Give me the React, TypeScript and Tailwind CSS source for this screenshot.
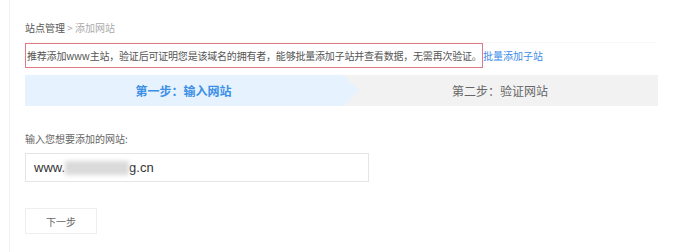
import React from "react";

const cjk = { fontFamily: '"Noto Sans CJK SC", "Noto Sans", sans-serif' };

export default function App() {
  return (
    <div className="w-[697px] h-[252px] bg-white overflow-hidden" style={cjk}>
      <div className="ml-[9px] h-full border-l border-[#f0f0f0] pl-[15px] pr-[39px]">
        <div className="pt-[21px] h-[43px] border-b border-dotted border-[#f2f2f2] text-[10px] leading-[14px] text-[#555]">
          站点管理 <span className="text-[#aaa]">&gt; 添加网站</span>
        </div>
        <div className="flex items-center h-[26px] -mt-[1px]">
          <div className="h-[25px] w-[458px] border border-[#e07a86] flex items-center pl-[1px] text-[10px] text-[#555] whitespace-nowrap tracking-[-0.2px]">
            推荐添加www主站，验证后可证明您是该域名的拥有者，能够批量添加子站并查看数据，无需再次验证。
          </div>
          <a className="text-[10px] text-[#3b8bea] whitespace-nowrap">批量添加子站</a>
        </div>
        <div className="mt-[7px] h-[31px] flex bg-[#f2f2f2]">
          <div className="relative w-[317px] bg-[#e6f2fd] flex items-center justify-center">
            <span className="text-[12px] font-semibold text-[#3b8fe6]">第一步：输入网站</span>
            <svg className="absolute left-[317px] top-0" width="18" height="31" viewBox="0 0 18 31">
              <polygon points="0,0 1,0 17,15.5 1,31 0,31" fill="#e6f2fd" />
            </svg>
          </div>
          <div className="flex-1 flex items-center justify-center">
            <span className="text-[12px] text-[#666]">第二步：验证网站</span>
          </div>
        </div>
        <div className="mt-[26px] text-[10px] leading-[14px] text-[#666]">输入您想要添加的网站:</div>
        <div className="mt-[7px] w-[344px] h-[29px] border border-[#e5e5e5] flex items-center pl-[8px] text-[13px] text-[#333]" style={{ fontFamily: '"Liberation Sans", Arial, sans-serif' }}>
          <span>www.</span>
          <span className="inline-block w-[64px] h-[14px] bg-[#dadada] blur-[2px]" />
          <span>g.cn</span>
        </div>
        <button className="mt-[26px] w-[72px] h-[26px] border border-[#eeeeee] bg-white text-[10px] text-[#666]">
          下一步
        </button>
      </div>
    </div>
  );
}
